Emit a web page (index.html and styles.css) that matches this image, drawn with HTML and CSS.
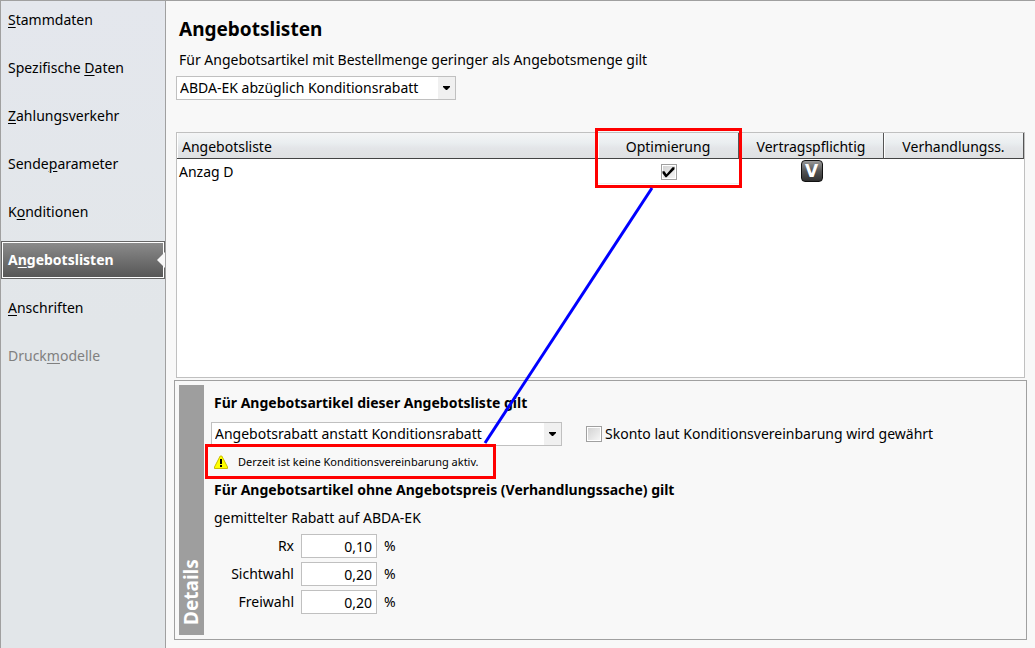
FILE: index.html
```
<!DOCTYPE html>
<html lang="de">
<head>
<meta charset="UTF-8" />
<meta name="viewport" content="width=device-width, initial-scale=1" />
<title>Angebotslisten</title>
<link rel="stylesheet" href="styles.css">
</head>
<body>

<!-- Sidebar -->
<nav class="sidebar">
  <a href="#"><u>S</u>tammdaten</a>
  <a href="#">Spezifische <u>D</u>aten</a>
  <a href="#"><u>Z</u>ahlungsverkehr</a>
  <a href="#">Sende<u>p</u>arameter</a>
  <a href="#">K<u>o</u>nditionen</a>
  <a href="#" class="active" aria-current="page">A<u>n</u>gebotslisten</a>
  <a href="#"><u>A</u>nschriften</a>
  <a href="#" class="disabled" aria-disabled="true">Druck<u>m</u>odelle</a>
</nav>

<main>
  <h1>Angebotslisten</h1>
  <label class="intro" for="basis">Für Angebotsartikel mit Bestellmenge geringer als Angebotsmenge gilt</label>
  <div class="dropdown basis">
    <select id="basis">
      <option>ABDA-EK abzüglich Konditionsrabatt</option>
    </select>
    <svg class="arrow" viewBox="0 0 7 4" aria-hidden="true"><path d="M0 0h7v1L4 4H3L0 1z" /></svg>
  </div>

  <!-- Offer lists -->
  <div class="list">
    <table>
      <thead>
        <tr>
          <th class="name">Angebotsliste</th>
          <th class="opt">Optimierung</th>
          <th class="contract">Vertragspflichtig</th>
          <th class="nego">Verhandlungss.</th>
        </tr>
      </thead>
      <tbody>
        <tr>
          <td class="name">Anzag D</td>
          <td class="opt"><input type="checkbox" class="check" aria-label="Optimierung" checked /></td>
          <td><span class="badge">V</span></td>
          <td></td>
        </tr>
      </tbody>
    </table>
  </div>

  <!-- Details -->
  <section class="details">
    <div class="tab"><span>Details</span></div>
    <div class="fields">
      <h2>Für Angebotsartikel dieser Angebotsliste gilt</h2>
      <div class="row">
        <div class="dropdown rule">
          <select aria-label="Für Angebotsartikel dieser Angebotsliste gilt">
            <option>Angebotsrabatt anstatt Konditionsrabatt</option>
          </select>
          <svg class="arrow" viewBox="0 0 7 4" aria-hidden="true"><path d="M0 0h7v1L4 4H3L0 1z" /></svg>
        </div>
        <label class="skonto"><input type="checkbox" class="check" />Skonto laut Konditionsvereinbarung wird gewährt</label>
      </div>
      <p class="warning">
        <svg width="14" height="14" viewBox="0 0 14 14" aria-hidden="true">
          <path d="M6.2 1h1.6L13.5 12v1.5H.5V12z" fill="#ffff00" stroke="#c9bd00" />
          <path d="M6 4h2v5H6zM6 10h2v2H6z" fill="#000" />
        </svg>
        Derzeit ist keine Konditionsvereinbarung aktiv.
      </p>
      <h2>Für Angebotsartikel ohne Angebotspreis (Verhandlungssache) gilt</h2>
      <p class="basis-text">gemittelter Rabatt auf ABDA-EK</p>
      <div class="rates">
        <label for="rx">Rx</label><input id="rx" type="text" value="0,10" /><span>%</span>
        <label for="sicht">Sichtwahl</label><input id="sicht" type="text" value="0,20" /><span>%</span>
        <label for="frei">Freiwahl</label><input id="frei" type="text" value="0,20" /><span>%</span>
      </div>
    </div>
  </section>
</main>

<!-- Callouts drawn over the form -->
<svg class="callouts" width="1035" height="648" viewBox="0 0 1035 648" aria-hidden="true">
  <rect x="596.5" y="129.5" width="144" height="57" />
  <rect x="206.5" y="445.5" width="288" height="32" />
  <path d="M652 188L485 443" />
</svg>

</body>
</html>
```
FILE: styles.css
```
* {margin: 0; padding: 0; box-sizing: border-box;}
body {
  display: flex;
  position: relative;
  min-height: 100vh;
  font-family: 'Noto Sans', 'Open Sans', sans-serif;
  font-size: 14px;
  line-height: 20px;
  background: #f8f8f8;
  color: #000;
  border-top: 1px solid #a0a0a0;
}
input, select {font: inherit; color: inherit;}

/* Sidebar */
.sidebar {
  display: flex;
  flex-direction: column;
  gap: 10px;
  flex: 0 0 166px;
  background: linear-gradient(180deg, #e4e7ed, #e2e6e9 50%);
  border-left: 1px solid #a0a0a0;
  border-right: 1px solid #a0a0a0;
}
.sidebar a {
  height: 38px;
  padding: 9px 7px;
  color: #000;
  text-decoration: none;
}
.sidebar u {
  text-underline-offset: 2px;
}
.sidebar a.active {
  position: relative;
  padding: 8px 6px;
  font-weight: 700;
  color: #fff;
  background: linear-gradient(180deg, #8c8c8c, #555);
  border: 1px solid #666;
  box-shadow: inset 0 0 0 1px #fff;
}
.sidebar a.active::after {
  content: '';
  position: absolute;
  right: -1px;
  top: 10px;
  border: 8px solid transparent;
  border-right-color: #f8f8f8;
  border-left-width: 0;
}
.sidebar a.disabled {
  color: #808080;
}

/* Main area */
main {
  flex: 1;
  min-width: 0;
  display: flex;
  flex-direction: column;
  padding: 14px 8px 8px;
}
h1 {
  padding: 0 5px;
  font-size: 19px;
  line-height: 28px;
}
.intro {
  padding: 7px 5px 6px;
}

/* Drop-downs */
.dropdown {
  position: relative;
  height: 24px;
}
.dropdown select {
  width: 100%;
  height: 100%;
  padding: 0 20px 0 3px;
  appearance: none;
  border: 1px solid #c0c0c0;
  border-radius: 0;
  background: linear-gradient(90deg, #fff, #fff) 0 0 / calc(100% - 17px) 100% no-repeat #f0f0f0;
}
.dropdown .arrow {
  position: absolute;
  right: 6px;
  top: 10px;
  width: 7px;
  height: 4px;
  pointer-events: none;
}
.basis {
  width: 280px;
  margin: 0 2px 32px;
}

/* List */
.list {
  flex: 1;
  margin: 0 2px 2px;
  background: #fff;
  border: 1px solid #c0c0c0;
}
table {
  width: 100%;
  table-layout: fixed;
  border-collapse: separate;
  border-spacing: 0;
}
th {
  height: 26px;
  padding-top: 2px;
  font-weight: 400;
  background: linear-gradient(180deg, #f4f5f6, #eaeef0 40%, #e3e5e8 60%, #dfe1e3);
  border-right: 1px solid #555;
  border-bottom: 1px solid #444;
  box-shadow: inset 1px 0 #fff;
}
td {
  height: 25px;
  text-align: center;
  vertical-align: top;
}
th.name {
  text-align: left;
  padding-left: 5px;
}
td.name {
  text-align: left;
  padding: 3px 2px 0;
}
th.opt {width: 141px;}
th.contract {width: 145px;}
th.nego {width: 140px;}
td.opt {
  padding-top: 2px;
  border-bottom: 1px solid #f0f0f0;
}
.check {
  appearance: none;
  width: 16px;
  height: 16px;
  flex: none;
  display: inline-block;
  vertical-align: middle;
  border: 1px solid #a0a0a0;
  background: linear-gradient(135deg, #d0d0d0, #f8f8f8);
  box-shadow: inset 0 0 0 1px #fff;
}
.check:checked::after {
  content: '';
  display: block;
  width: 13px;
  height: 13px;
  background: #000;
  clip-path: polygon(1px 6px, 3px 6px, 5px 9px, 11px 2px, 13px 2px, 13px 4px, 5px 12px, 4px 12px, 1px 8px);
}
.badge {
  display: inline-block;
  width: 22px;
  height: 22px;
  vertical-align: top;
  margin-top: 1px;
  border: 1px solid #111;
  border-radius: 4px;
  background: linear-gradient(180deg, #999, #555 50%, #303030);
  color: #fff;
  font-family: 'DejaVu Sans', sans-serif;
  font-size: 17px;
  font-weight: 700;
  line-height: 20px;
}

/* Details */
.details {
  display: flex;
  padding: 4px;
  border: 1px solid #a0a0a0;
}
.tab {
  width: 25px;
  padding: 10px 0;
  background: #9e9e9e;
  color: #fff;
  font-size: 19px;
  font-weight: 700;
  line-height: 25px;
  writing-mode: vertical-rl;
  transform: rotate(180deg);
}
.fields {
  flex: 1;
  min-width: 0;
  padding: 8px 0 21px 7px;
}
h2 {
  padding: 0 3px;
  font-size: 14px;
  line-height: 20px;
}
.row {
  display: flex;
  align-items: center;
  gap: 24px;
  margin-top: 9px;
}
.rule {
  width: 351px;
}
.skonto {
  display: flex;
  align-items: center;
  gap: 3px;
}
.warning {
  display: flex;
  align-items: center;
  gap: 10px;
  height: 34px;
  padding: 0 3px 2px;
  font-size: 11px;
}
.basis-text {
  padding: 8px 3px 6px;
}
.rates {
  display: grid;
  grid-template-columns: 83px 76px auto;
  align-items: center;
  gap: 4px 7px;
}
.rates label {
  text-align: right;
}
.rates input {
  width: 100%;
  height: 24px;
  padding: 0 4px;
  text-align: right;
  background: #fff;
  border: 1px solid #c0c0c0;
}

/* Callouts */
.callouts {
  position: absolute;
  left: 0;
  top: -1px;
  pointer-events: none;
  fill: none;
  stroke: #f00;
  stroke-width: 3px;
}
.callouts path {
  stroke: #00f;
}
```
